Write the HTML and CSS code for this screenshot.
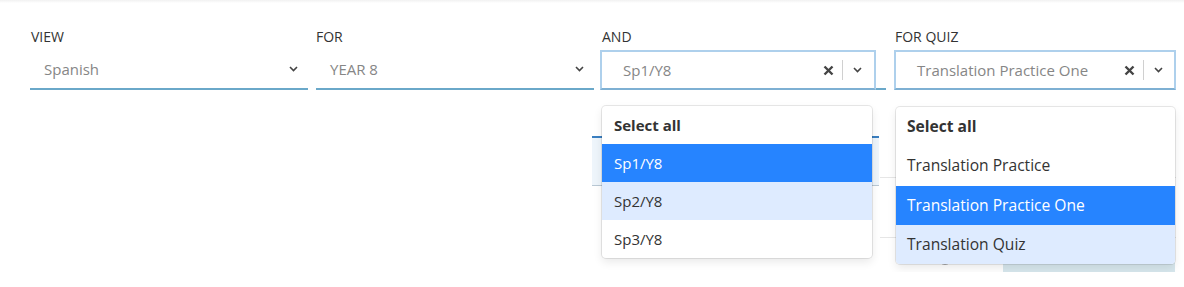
FILE: index.html
```html
<!DOCTYPE html>
<html lang="en">
<head>
    <meta charset="UTF-8">
    <title>Quiz results filter</title>
    <link rel="stylesheet" href="styles.css">
</head>
<body>
    <div class="topbar"></div>

    <div class="filters">
        <div class="field field-view">
            <div class="field-label">VIEW</div>
            <div class="control">
                <span class="control-value">Spanish</span>
                <span class="chevron"><svg width="9" height="6" viewBox="0 0 9 6"><path d="M1 1l3.5 3.5L8 1" fill="none" stroke="#444" stroke-width="1.6"/></svg></span>
            </div>
        </div>

        <div class="field field-for">
            <div class="field-label">FOR</div>
            <div class="control">
                <span class="control-value">YEAR 8</span>
                <span class="chevron"><svg width="9" height="6" viewBox="0 0 9 6"><path d="M1 1l3.5 3.5L8 1" fill="none" stroke="#444" stroke-width="1.6"/></svg></span>
            </div>
        </div>

        <div class="field field-and">
            <div class="field-label">AND</div>
            <div class="control focused">
                <span class="control-value">Sp1/Y8</span>
                <span class="clear"><svg width="11" height="11" viewBox="0 0 11 11"><path d="M1.5 1.5l8 8M9.5 1.5l-8 8" stroke="#444" stroke-width="2.4"/></svg></span>
                <span class="sep"></span>
                <span class="chevron"><svg width="9" height="6" viewBox="0 0 9 6"><path d="M1 1l3.5 3.5L8 1" fill="none" stroke="#444" stroke-width="1.6"/></svg></span>
            </div>
            <ul class="menu menu-class">
                <li class="menu-all">Select all</li>
                <li class="selected">Sp1/Y8</li>
                <li class="hover">Sp2/Y8</li>
                <li>Sp3/Y8</li>
            </ul>
        </div>

        <div class="field field-quiz">
            <div class="field-label">FOR QUIZ</div>
            <div class="control focused">
                <span class="control-value">Translation Practice One</span>
                <span class="clear"><svg width="11" height="11" viewBox="0 0 11 11"><path d="M1.5 1.5l8 8M9.5 1.5l-8 8" stroke="#444" stroke-width="2.4"/></svg></span>
                <span class="sep"></span>
                <span class="chevron"><svg width="9" height="6" viewBox="0 0 9 6"><path d="M1 1l3.5 3.5L8 1" fill="none" stroke="#444" stroke-width="1.6"/></svg></span>
            </div>
            <ul class="menu menu-quiz">
                <li class="menu-all">Select all</li>
                <li>Translation Practice</li>
                <li class="selected">Translation Practice One</li>
                <li class="hover">Translation Quiz</li>
            </ul>
        </div>
    </div>

    <!-- page content, mostly hidden behind the open menus -->
    <div class="content">
        <div class="tab-panel"></div>
        <div class="results">
            <div class="results-row first"></div>
            <div class="results-row second"></div>
            <div class="results-row third">
                <span class="info-dot"></span>
                <span class="score-box"></span>
            </div>
        </div>
    </div>
</body>
</html>
```

FILE: styles.css
```css
body {
    margin: 0;
    font-family: 'Open Sans', 'Noto Sans', sans-serif;
    background-color: #fff;
    color: #333;
}
.topbar {
    height: 3px;
    background: linear-gradient(#f1f1f1, #fff);
}
.filters {
    display: flex;
    padding: 25px 0 0 30px;
}
.field {
    position: relative;
    display: flex;
    flex-direction: column;
}
.field-view {
    width: 278px;
    margin-right: 8px;
}
.field-for {
    width: 278px;
    margin-right: 6px;
}
.field-and {
    width: 286px;
    margin-right: 8px;
    background: linear-gradient(#6aa8c9, #6aa8c9) no-repeat left bottom / 100% 2px;
}
.field-quiz {
    width: 282px;
}
.field-label {
    font-size: 14px;
    line-height: 18px;
    margin-bottom: 4px;
    color: #333;
}
.field-view .field-label {
    padding-left: 1px;
}
.field-and .field-label {
    padding-left: 2px;
}
.field-quiz .field-label {
    padding-left: 1px;
}
.control {
    display: flex;
    align-items: center;
    box-sizing: border-box;
    height: 40px;
    padding: 0 10px 0 14px;
    border-bottom: 2px solid #6aa8c9;
    background: #fff;
}
.control-value {
    flex-grow: 1;
    font-size: 15px;
    color: #868686;
    white-space: nowrap;
}
.chevron {
    display: flex;
    width: 9px;
}
.control.focused {
    width: 276px;
    padding: 0 12px 0 21px;
    border: 2px solid #aed0ec;
    border-bottom-color: #7eb0d3;
}
.field-quiz .control.focused {
    width: 282px;
    padding-right: 11px;
}
.clear {
    display: flex;
    width: 11px;
}
.sep {
    width: 1px;
    height: 20px;
    margin: 0 10px 0 8px;
    background: #d0d0d0;
}
.menu {
    position: absolute;
    left: 2px;
    list-style: none;
    margin: 0;
    padding: 0;
    background: #fff;
    border-radius: 4px;
    box-shadow: 0 0 0 1px rgba(0, 0, 0, 0.09), 0 4px 10px rgba(0, 0, 0, 0.09);
    overflow: hidden;
    z-index: 2;
}
.menu li {
    font-size: 15px;
    color: #333;
    white-space: nowrap;
}
.menu-class {
    top: 78px;
    width: 270px;
}
.menu-class li {
    height: 38px;
    line-height: 38px;
    padding-left: 12px;
}
.menu-quiz {
    top: 79px;
    width: 279px;
}
.menu-quiz li {
    height: 39.25px;
    line-height: 39px;
    padding-left: 11px;
    font-size: 15.6px;
}
.menu li.menu-all {
    font-weight: 700;
}
.menu li.selected {
    background: #2684ff;
    color: #fff;
}
.menu li.hover {
    background: #deebff;
}
.content {
    display: flex;
    margin-top: 46px;
    padding-left: 592px;
}
.tab-panel {
    width: 287px;
    height: 47px;
    border-top: 2px solid #3a7fc1;
    border-bottom: 1px solid #b9c8d4;
    background: #eef5fb;
}
.results {
    width: 296px;
    margin-left: 1px;
}
.results-row {
    border-bottom: 1px solid #e6e6e6;
}
.results-row.first {
    height: 41px;
}
.results-row.second {
    height: 59px;
}
.results-row.third {
    display: flex;
    align-items: flex-end;
    height: 34px;
    border-bottom: none;
}
.info-dot {
    box-sizing: border-box;
    width: 14px;
    height: 14px;
    margin: 0 0 7px 58px;
    border: 1.5px solid #aaa;
    border-radius: 50%;
}
.score-box {
    width: 172px;
    height: 30px;
    margin-left: 51px;
    background: #d7e7ed;
}
```
